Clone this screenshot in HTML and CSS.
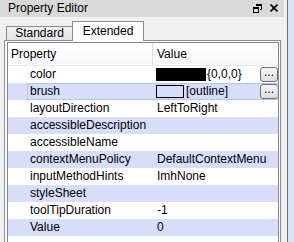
FILE: index.html
```html
<!DOCTYPE html>
<html>
<head>
<meta charset="utf-8">
<link rel="stylesheet" href="styles.css">
</head>
<body>
<div class="app">
  <div class="dock">
    <div class="titlebar">
      <span class="title">Property Editor</span>
      <span class="tbtns">
        <svg class="ico" width="9" height="9" viewBox="0 0 9 9">
          <path d="M3 0.5H8.5V5.5H7" fill="none" stroke="#000" stroke-width="1"/>
          <rect x="3" y="0" width="6" height="2" fill="#000"/>
          <rect x="0.5" y="3.5" width="5" height="5" fill="none" stroke="#000" stroke-width="1"/>
          <rect x="0" y="3" width="6" height="2" fill="#000"/>
        </svg>
        <svg class="ico" width="8" height="8" viewBox="0 0 8 8">
          <path d="M0.5 0.5L7.5 7.5M7.5 0.5L0.5 7.5" stroke="#000" stroke-width="1.6"/>
        </svg>
      </span>
    </div>
    <div class="content">
      <div class="tabs">
        <div class="tab">Standard</div>
        <div class="tab active">Extended</div>
      </div>
      <div class="pane">
        <div class="tree">
          <div class="row header">
            <div class="c1">Property</div>
            <div class="c2">Value</div>
          </div>
          <div class="row">
            <div class="c1">color</div>
            <div class="c2 swc"><span class="sw black"></span><span>{0,0,0}</span><span class="dots">...</span></div>
          </div>
          <div class="row alt sel">
            <div class="c1">brush</div>
            <div class="c2 swc"><span class="sw outline"></span><span>[outline]</span><span class="dots">...</span></div>
          </div>
          <div class="row">
            <div class="c1">layoutDirection</div>
            <div class="c2">LeftToRight</div>
          </div>
          <div class="row alt">
            <div class="c1">accessibleDescription</div>
            <div class="c2"></div>
          </div>
          <div class="row">
            <div class="c1">accessibleName</div>
            <div class="c2"></div>
          </div>
          <div class="row alt">
            <div class="c1">contextMenuPolicy</div>
            <div class="c2">DefaultContextMenu</div>
          </div>
          <div class="row">
            <div class="c1">inputMethodHints</div>
            <div class="c2">ImhNone</div>
          </div>
          <div class="row alt">
            <div class="c1">styleSheet</div>
            <div class="c2"></div>
          </div>
          <div class="row">
            <div class="c1">toolTipDuration</div>
            <div class="c2">-1</div>
          </div>
          <div class="row alt">
            <div class="c1">Value</div>
            <div class="c2">0</div>
          </div>
        </div>
      </div>
    </div>
  </div>
  <div class="splitter"></div>
  <div class="side"></div>
</div>
</body>
</html>
```
FILE: styles.css
```css
html, body {
  margin: 0;
  padding: 0;
}
body {
  width: 294px;
  height: 242px;
  overflow: hidden;
  background: #f0f0f0;
  font-family: "Liberation Sans", Arial, sans-serif;
  font-size: 12px;
  color: #000;
}
.app {
  display: flex;
  height: 242px;
}
.dock {
  width: 287px;
  display: flex;
  flex-direction: column;
  background: #f0f0f0;
}
.titlebar {
  height: 17px;
  margin-right: 3px;
  background: #d9d9d9;
  display: flex;
  align-items: center;
  justify-content: space-between;
  box-sizing: border-box;
  padding: 0 6px 1px 8px;
}
.title {
  line-height: 14px;
}
.tbtns {
  display: flex;
  align-items: center;
  gap: 8px;
}
.ico {
  display: block;
}
.content {
  padding: 4px 6px 0 4px;
  display: flex;
  flex-direction: column;
  flex: 1;
}
.tabs {
  display: flex;
  align-items: flex-end;
  height: 19px;
  padding-left: 2px;
  position: relative;
  z-index: 1;
}
.tab {
  box-sizing: border-box;
  border: 1px solid #898c95;
  border-bottom: none;
  text-align: center;
}
.tab:first-child {
  width: 66px;
  height: 14px;
  line-height: 12px;
  border-right: none;
  background: linear-gradient(#f2f2f2, #e1e1e1);
}
.tab.active {
  width: 72px;
  height: 20px;
  line-height: 18px;
  background: #fff;
  margin-bottom: -1px;
}
.pane {
  flex: 1;
  box-sizing: border-box;
  border: 1px solid #898c95;
  border-bottom: none;
  padding: 1px 1px 0 2px;
  background: #fcfcfc;
  display: flex;
  width: 277px;
}
.tree {
  flex: 1;
  box-sizing: border-box;
  border: 1px solid #828790;
  border-bottom: none;
  background: #fff;
}
.row {
  display: flex;
  height: 17px;
  line-height: 17px;
  box-sizing: border-box;
}
.row.header {
  height: 23px;
  line-height: 23px;
  background: linear-gradient(#ffffff, #f7f8fa);
  border-bottom: 1px solid #eaeaea;
}
.row.header .c1 {
  padding-left: 3px;
  border-right: 1px solid #dcdcdc;
  box-sizing: border-box;
}
.c1 {
  width: 145px;
  padding-left: 22px;
  box-sizing: border-box;
  flex: none;
  white-space: nowrap;
}
.c2 {
  flex: 1;
  padding-left: 4px;
  white-space: nowrap;
  display: flex;
  align-items: center;
}
.c2.swc {
  padding-left: 3px;
}
.alt {
  background: #d6defa;
}
.sel .c1 {
  position: relative;
}
.sel {
  position: relative;
}
.sel::after {
  content: "";
  position: absolute;
  left: 19px;
  right: 0;
  top: 0;
  bottom: 0;
  border: 1px solid #b7c4ee;
  pointer-events: none;
}
.sw {
  display: block;
  height: 13px;
  box-sizing: border-box;
  margin-right: 1px;
}
.sw.black {
  width: 50px;
  background: #000;
}
.sw.outline {
  width: 28px;
  border: 1px solid #000;
  margin-right: 2px;
}
.dots {
  margin-left: auto;
  width: 18px;
  height: 15px;
  box-sizing: border-box;
  border: 1px solid #707070;
  border-radius: 3px;
  background: linear-gradient(#f6f6f6, #dddddd);
  line-height: 9px;
  text-align: center;
  font-size: 12px;
  letter-spacing: 0;
}
.splitter {
  width: 1px;
  background: #6f6f6f;
}
.side {
  flex: 1;
  background: #d8e4f2;
}
```
